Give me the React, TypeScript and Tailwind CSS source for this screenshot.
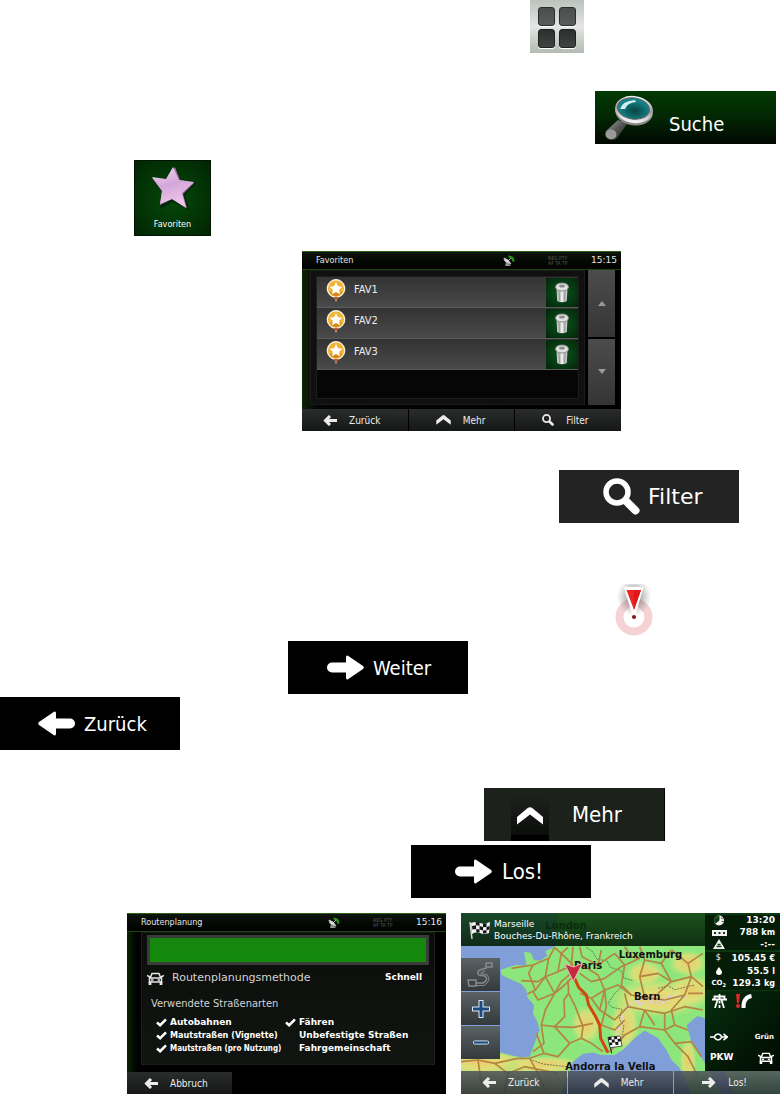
import type { ReactNode } from "react";

type IconProps = { className?: string };

const verdana = "font-['DejaVu_Sans',sans-serif]";
const tahoma = "font-['DejaVu_Sans_Condensed','DejaVu_Sans',sans-serif]";

/* ---------- Icons ---------- */

function ArrowIcon({ className = "" }: IconProps) {
  return (
    <svg viewBox="0 0 37 25" className={className} fill="currentColor" aria-hidden="true">
      <path d="M5 7.500h14V2.200Q19 0 21 .8L36 11q1.600 1.500 0 3L21 24.300Q19 25 19 22.800V17.500H5a5 5 0 0 1 0-10z" />
    </svg>
  );
}

function SmallArrowIcon({ className = "" }: IconProps) {
  return (
    <svg viewBox="0 0 14 11" className={className} fill="none" stroke="currentColor" strokeWidth="3" aria-hidden="true">
      <path d="M14 5.500H3M7 1L2.500 5.500 7 10" />
    </svg>
  );
}

function ChevronIcon({ className = "" }: IconProps) {
  return (
    <svg viewBox="0 0 26 18" className={className} fill="currentColor" aria-hidden="true">
      <path d="M0 10L11 .8Q13-.4 15 .8L26 10V17.500L13 7.500 0 17.500z" />
    </svg>
  );
}

function LensIcon({ className = "" }: IconProps) {
  return (
    <svg viewBox="0 0 37 37" className={className} fill="none" stroke="currentColor" aria-hidden="true">
      <circle cx="14" cy="14" r="11" strokeWidth="5.500" />
      <path d="M20.500 20.500l4 4" strokeWidth="5" />
      <path d="M24 24l8.500 8.500" strokeWidth="8" strokeLinecap="round" />
    </svg>
  );
}

function MagnifierPicture({ className = "" }: IconProps) {
  return (
    <svg viewBox="0 0 50 46" className={className} aria-hidden="true">
      <defs>
        <radialGradient id="glass" cx="55%" cy="60%">
          <stop offset="0" stopColor="#06453f" />
          <stop offset="1" stopColor="#16838c" />
        </radialGradient>
        <linearGradient id="rim" x1="0" y1="0" x2="0" y2="1">
          <stop offset="0" stopColor="#f5f5f5" />
          <stop offset="0.5" stopColor="#9b9b9b" />
          <stop offset="1" stopColor="#ffffff" />
        </linearGradient>
        <linearGradient id="grip" x1="0" y1="0" x2="1" y2="1">
          <stop offset="0" stopColor="#a5a5a5" />
          <stop offset="0.5" stopColor="#555555" />
          <stop offset="1" stopColor="#161616" />
        </linearGradient>
      </defs>
      <path d="M13 25L1 36q-2 6 4 8 6 2 7-1L22 29z" fill="url(#grip)" />
      <ellipse cx="6" cy="39.500" rx="5.500" ry="5" fill="#9a9a9a" />
      <ellipse cx="29" cy="16.500" rx="19" ry="14" fill="#8a8a8a" transform="rotate(8 29 16.500)" />
      <ellipse cx="29" cy="14.500" rx="19" ry="13.500" fill="url(#rim)" transform="rotate(8 29 14.500)" />
      <ellipse cx="28.500" cy="13.500" rx="16" ry="10.500" fill="url(#glass)" stroke="#5a6262" transform="rotate(8 28.500 13.500)" />
      <path d="M15 14q2-8 15-9l1 2q-9 1-11 7z" fill="#cfeeee" />
    </svg>
  );
}

function StarPicture({ className = "" }: IconProps) {
  return (
    <svg viewBox="0 0 44 44" className={className} aria-hidden="true">
      <defs>
        <linearGradient id="star" x1="0" y1="0" x2="0.3" y2="1">
          <stop offset="0" stopColor="#f2dcf0" />
          <stop offset="0.5" stopColor="#d3a6da" />
          <stop offset="1" stopColor="#f0c6e8" />
        </linearGradient>
      </defs>
      <path d="M25 4l6 13 14 0-11 12 4 15-16-8-13 7 3-15L3 15l14 2z" fill="#02100280" />
      <path d="M24 1l5 13 14 3-11 11 4 14-15-9-12 6 2-14L1 12l15 2z" fill="#a06aa6" />
      <path d="M22 1l6 13 15 2-12 11 4 15-14-9-12 5 2-13L1 11l14 2z" fill="url(#star)" />
    </svg>
  );
}

function PinIcon({ className = "" }: IconProps) {
  return (
    <svg viewBox="0 0 20 23" className={className} aria-hidden="true">
      <path d="M10 0a9.500 9.500 0 0 1 4 18l-2.500.8L10 23l-1.500-4.200L6 18A9.500 9.500 0 0 1 10 0z" fill="#fbf3e2" />
      <circle cx="10" cy="9.500" r="8" fill="#f2b233" />
      <path d="M4 13q6-3 12 0-2 4-6 4.500Q6 17 4 13z" fill="#d98a1c" />
      <path d="M8 18h4L10 22z" fill="#c4511b" />
      <path d="M10 3l2 4.200 4.500.5-3.400 3 1 4.600L10 13l-4.100 2.300 1-4.600-3.400-3L8 7.200z" fill="#fff" />
    </svg>
  );
}

function BinIcon({ className = "" }: IconProps) {
  return (
    <svg viewBox="0 0 14 21" className={className} aria-hidden="true">
      <path d="M1.500 6h11l-.7 13q-4.800 2.500-9.600 0z" fill="#c9c9c9" />
      <path d="M4 9l.4 10M10 9l-.4 10" stroke="#909090" />
      <path d="M7 9v11" stroke="#ececec" strokeWidth="2" />
      <ellipse cx="7" cy="5" rx="6.500" ry="4" fill="#e3e3e3" stroke="#8b8b8b" />
      <ellipse cx="7" cy="4" rx="3" ry="1.500" fill="#8d8d8d" />
    </svg>
  );
}

function SatelliteIcon({ className = "" }: IconProps) {
  return (
    <svg viewBox="0 0 12 12" className={className} aria-hidden="true">
      <path d="M1 3q0 5 7 6L5 5z" fill="#e4e0e4" stroke="#bbb" />
      <path d="M3 7l-1 4h6L5 8z" fill="#8f8f8f" />
      <path d="M5 6l3-3" stroke="#ccc" />
      <path d="M5.500 0.500q6 0 6 6L9.500 7Q9 3 5.500 2.500z" fill="#2f8f1c" />
    </svg>
  );
}

function CarIcon({ className = "" }: IconProps) {
  return (
    <svg viewBox="0 0 17 13" className={className} fill="none" stroke="currentColor" strokeWidth="1.500" aria-hidden="true">
      <path d="M3.500 5.500l1.500-4h7l1.500 4M2.500 6h12v4h-12zM0 3.500l3 1.500M17 3.500l-3 1.500" />
      <path d="M3 9.500V13M14 9.500V13" strokeWidth="2.800" />
      <path d="M4 8h2.500M10.500 8H13" />
    </svg>
  );
}

function CheckIcon({ className = "" }: IconProps) {
  return (
    <svg viewBox="0 0 12 10" className={className} fill="none" stroke="currentColor" strokeWidth="2.800" aria-hidden="true">
      <path d="M1 5l3.500 3L11 1.500" />
    </svg>
  );
}

function CheckeredFlag({ className = "" }: IconProps) {
  return (
    <svg viewBox="0 0 22 18" className={className} aria-hidden="true">
      <path d="M1 1l2 17" stroke="#d5d5d5" strokeWidth="1.500" />
      <path d="M2 2q5-2 9 0t10-1l-1 11q-5 2-9 0t-8 1z" fill="#f4f4f4" />
      <path
        d="M6.500 1l4 .3v3.500l-3.500-.6zM14 2.500l3.500-.2V6L14 6.200zM3 5l4-.8.2 3.700-3.800.6zM10.500 5l3.500 1v3.500L10.500 8.500zM17.500 6l3-1-.2 3.400-2.800.9zM7 8l3.500.5v3L7.500 11zM14 9.500l3.500-.3v3L14 12.600z"
        fill="#151515"
      />
    </svg>
  );
}

/* ---------- Stand-alone controls ---------- */

interface TileButtonProps {
  className: string;
  children: ReactNode;
}

function TileButton({ className, children }: TileButtonProps) {
  return (
    <button type="button" className={`flex h-[53px] items-center whitespace-nowrap text-white ${className}`}>
      {children}
    </button>
  );
}

function MenuButton() {
  return (
    <button
      type="button"
      aria-label="Menü"
      className="grid h-[53px] w-[54px] grid-cols-2 content-start gap-x-1 gap-y-[3px] bg-linear-to-b from-[#bcc2bd] via-[#e3e6e2] to-[#b4bab4] px-2 pt-[7px]"
    >
      <span className="h-[19px] rounded-[3px] border border-[#2b2d2d] bg-linear-to-b from-[#4b4e4e] to-[#5a5c5c] shadow-[0_1px_0_#fff]" />
      <span className="h-[19px] rounded-[3px] border border-[#2b2d2d] bg-linear-to-b from-[#4b4e4e] to-[#5a5c5c] shadow-[0_1px_0_#fff]" />
      <span className="h-[19px] rounded-[3px] border border-[#1f2020] bg-linear-to-b from-[#2d2f2f] to-[#424444] shadow-[0_1px_0_#fff]" />
      <span className="h-[19px] rounded-[3px] border border-[#1f2020] bg-linear-to-b from-[#2d2f2f] to-[#424444] shadow-[0_1px_0_#fff]" />
    </button>
  );
}

function PositionMarker() {
  return (
    <svg viewBox="0 0 40 52" className="h-[52px] w-10" role="img" aria-label="Position">
      <defs>
        <radialGradient id="halo" cx="50%" cy="50%">
          <stop offset="0" stopColor="#555" stopOpacity="0.8" />
          <stop offset="1" stopColor="#777" stopOpacity="0" />
        </radialGradient>
      </defs>
      <circle cx="20" cy="33" r="14.500" fill="#fff" stroke="#f5d3d4" strokeWidth="8" />
      <ellipse cx="20" cy="13" rx="17" ry="19" fill="url(#halo)" />
      <path d="M9.500 3h20L21.500 31h-3z" fill="#fff" />
      <path d="M12.500 6h14.500L20 26z" fill="#ee2326" />
      <path d="M20 6h7L20 26z" fill="#de191e" />
      <circle cx="20" cy="33" r="2" fill="#8b0f14" />
    </svg>
  );
}

/* ---------- Device screens ---------- */

function ScreenHeader({ title, time }: { title: string; time: string }) {
  return (
    <header className="flex h-[19px] items-center border-t border-b border-t-[#2c6313] border-b-[#1d450c] bg-linear-to-b from-[#0e150c] to-[#010201] pr-1 pl-[14px] text-[9px] text-[#e4e4e4]">
      <h2 className="flex-1">{title}</h2>
      <SatelliteIcon className="mr-[33px] size-3" />
      <p className="mr-[19px] w-6 text-[5px] leading-[5px] whitespace-nowrap text-[#5a5a5a]">
        REG PTY
        <br />
        AF TA TP
      </p>
      <time className={verdana}>{time}</time>
    </header>
  );
}

const barButton = "flex items-center gap-3 bg-linear-to-b from-[#2a2d2b] to-[#151816] text-[10px] text-[#ececec]";

const favourites = ["FAV1", "FAV2", "FAV3"];

function FavouritesScreen() {
  return (
    <section className={`flex h-[180px] w-[319px] flex-col bg-black ${tahoma}`}>
      <ScreenHeader title="Favoriten" time="15:15" />
      <div className="flex flex-1 gap-[3px] bg-linear-to-r from-[#0d2405] via-[#050505] via-5% to-black pr-[6px] pb-1 pl-2">
        <div className="flex-1 border border-[#1c1c1c] bg-[#101010] p-[5px]">
          <ul className="h-full border border-[#1d1d1d] bg-[#060606]">
            {favourites.map((name) => (
              <li key={name} className="flex h-[31px] items-center border-b border-[#5a5a5a] bg-linear-to-b from-[#333] to-[#4a4a4a] pl-[9px] text-[11px] text-[#ececec]">
                <PinIcon className="mr-2 mb-1 h-[23px] w-5" />
                <span className="flex-1 pb-1">{name}</span>
                <button type="button" aria-label={`${name} löschen`} className="flex h-[29px] w-8 items-center justify-center bg-radial from-[#0b5a1d] to-[#03240a]">
                  <BinIcon className="h-[21px] w-[14px]" />
                </button>
              </li>
            ))}
          </ul>
        </div>
        <div className="flex w-[27px] flex-col gap-[2px]">
          <button type="button" aria-label="Nach oben" className="flex flex-1 items-center justify-center bg-linear-to-b from-[#4c4c4c] to-[#353535] text-[#999]">
            <svg viewBox="0 0 8 5" className="h-[5px] w-2" fill="currentColor">
              <path d="M4 0l4 5H0z" />
            </svg>
          </button>
          <button type="button" aria-label="Nach unten" className="flex flex-1 items-center justify-center bg-linear-to-b from-[#4c4c4c] to-[#353535] text-[#999]">
            <svg viewBox="0 0 8 5" className="h-[5px] w-2" fill="currentColor">
              <path d="M4 5l4-5H0z" />
            </svg>
          </button>
        </div>
      </div>
      <nav className="grid h-[22px] grid-cols-3 gap-px">
        <button type="button" className={`${barButton} pl-[21px]`}>
          <SmallArrowIcon className="h-[11px] w-[14px]" />
          Zurück
        </button>
        <button type="button" className={`${barButton} pl-[27px]`}>
          <ChevronIcon className="h-[10px] w-[15px]" />
          Mehr
        </button>
        <button type="button" className={`${barButton} pl-[27px]`}>
          <LensIcon className="size-3" />
          Filter
        </button>
      </nav>
    </section>
  );
}

const roadTypes = [
  { label: "Autobahnen", used: true, font: "font-['DejaVu_Sans',sans-serif] text-[9px]" },
  { label: "Fähren", used: true, font: "font-['DejaVu_Sans',sans-serif] text-[9px]" },
  { label: "Mautstraßen (Vignette)", used: true, font: "text-[9px]" },
  { label: "Unbefestigte Straßen", used: false, font: "font-['DejaVu_Sans',sans-serif] text-[9px]" },
  { label: "Mautstraßen (pro Nutzung)", used: true, font: "text-[8px]" },
  { label: "Fahrgemeinschaft", used: false, font: "font-['DejaVu_Sans',sans-serif] text-[9px]" },
];

function RouteScreen() {
  return (
    <section className={`flex h-[181px] min-w-0 flex-1 flex-col bg-black text-[#e6e6e6] ${tahoma}`}>
      <ScreenHeader title="Routenplanung" time="15:16" />
      <div className="flex-1 bg-linear-to-r from-[#0d2405] via-black via-5% to-black pr-[11px] pb-[7px] pl-[14px]">
        <div className="h-full border border-[#1b1f1b] bg-linear-to-b from-[#0b0d0b] to-[#111511] px-[5px] pt-[2px]">
          <div role="progressbar" aria-label="Routenplanung" className="h-[30px] border-[3px] border-[#3a3c3a] bg-[#333]">
            <div className="h-full w-full bg-linear-to-b from-[#16870f] to-[#148a0c]" />
          </div>
          <p className={`mt-[5px] flex h-4 items-center ${verdana}`}>
            <CarIcon className="h-[13px] w-[17px]" />
            <span className="ml-2 flex-1 text-[11px] text-[#d4d4d4]">Routenplanungsmethode</span>
            <b className="mr-[7px] text-[9px] text-white">Schnell</b>
          </p>
          <p className="mt-[10px] pl-1 text-[11px] leading-4 text-[#d4d4d4]">Verwendete Straßenarten</p>
          <div className="mt-1 grid grid-cols-[129px_1fr] pl-[9px] font-bold whitespace-nowrap text-white">
            {roadTypes.map((road) => (
              <label key={road.label} className={`relative flex h-[13px] items-center gap-[3px] ${road.font}`}>
                <input type="checkbox" defaultChecked={road.used} className="peer sr-only" />
                <CheckIcon className="invisible h-[9px] w-[11px] shrink-0 peer-checked:visible" />
                {road.label}
              </label>
            ))}
          </div>
        </div>
      </div>
      <nav className="flex h-[22px]">
        <button type="button" className={`${barButton} w-[105px] pl-[17px]`}>
          <SmallArrowIcon className="h-[11px] w-[14px]" />
          Abbruch
        </button>
      </nav>
    </section>
  );
}

/* ---------- Map ---------- */

const mainRoads = [
  "M290 112L272 145 225 165 160 175M225 165L212 190 232 240 208 252M290 112L320 140 345 165M272 145L262 200 232 240",
  "M345 165L300 185 262 200 240 215 190 212M345 185L310 215 290 250 240 270 225 245M290 250L262 300 250 345 258 400 225 425",
  "M262 200L290 250 320 225 345 200M330 210L332 250 352 290 375 350 370 385 335 400 290 350 250 345",
  "M290 350L320 320 318 270 332 250M335 400L300 440 258 430 235 370M370 385L400 400 435 425M290 350L345 352 405 340",
  "M340 165L345 110M300 185L310 130 330 112M365 110L372 140 420 165 470 130M372 165L420 195 440 240 425 300 470 330",
  "M365 190L400 215 440 205 490 170 545 145M440 240L480 225 520 255 560 262M440 240L445 290 430 345 470 360 500 330",
  "M420 165L430 120M470 130L500 165 490 225 520 255M545 110L560 150 545 200 560 262 620 270M560 150L610 160 640 120",
  "M610 160L640 215 600 250M640 215L700 200 735 230M640 120L690 160 700 200 680 255 620 270M690 160L735 130M545 200L600 190 640 215",
  "M470 330L510 290 560 300 620 310 680 290 735 300M510 290L500 250M560 300L545 350 500 375 455 425M545 350L620 360 650 345 690 360",
  "M620 310L620 360 650 400 690 440 720 500M650 400L700 395 730 440M650 345L640 300 680 255M560 300L590 345",
  "M9 455L60 450 110 460 180 445 215 445 258 430M60 450L70 520M110 460L150 490 200 470 300 490M150 490L140 545M215 445L240 490 260 540",
  "M425 300L400 265 365 250M400 265L440 240M480 400L500 375M735 250L690 250M500 110L520 140 545 145",
];

const mountains = [
  { cx: 600, cy: 265, rx: 150, ry: 60 },
  { cx: 600, cy: 270, rx: 110, ry: 40 },
  { cx: 500, cy: 345, rx: 46, ry: 80 },
  { cx: 385, cy: 345, rx: 48, ry: 60 },
  { cx: 260, cy: 462, rx: 120, ry: 24 },
  { cx: 70, cy: 455, rx: 110, ry: 38 },
  { cx: 560, cy: 190, rx: 60, ry: 40 },
  { cx: 700, cy: 240, rx: 70, ry: 50 },
  { cx: 690, cy: 160, rx: 60, ry: 40 },
  { cx: 690, cy: 450, rx: 26, ry: 70 },
];

function MapPicture() {
  return (
    <svg viewBox="9 9 957 543" preserveAspectRatio="xMidYMid slice" className="absolute inset-0 size-full" role="img" aria-label="Karte">
      <defs>
        <radialGradient id="relief">
          <stop offset="0" stopColor="#eccb6c" />
          <stop offset="0.6" stopColor="#e6df78" stopOpacity="0.8" />
          <stop offset="1" stopColor="#c8e67c" stopOpacity="0" />
        </radialGradient>
      </defs>
      <rect x="9" y="9" width="957" height="543" fill="#809fd8" />
      <path
        d="M300 9L290 110 262 124 268 138 245 152 228 150 218 128 198 126 206 168 175 165 150 172 128 180 132 195 150 205 190 222 205 240 208 262 228 285 225 310 238 335 245 360 228 405 215 440 190 442 140 432 100 420 9 415V552H310L330 500 345 455 375 432 405 428 430 436 470 436 495 420 530 385 560 362 600 385 625 420 640 450 665 475 700 552H966V9z"
        fill="#8ce67c"
      />
      <path d="M9 420L120 430 190 445 330 465 310 552H9z" fill="#c9dc78" />
      {mountains.map((m) => (
        <ellipse key={`${m.cx}-${m.cy}-${m.rx}`} {...m} fill="url(#relief)" />
      ))}
      <path d="M700 552L665 475 640 450 625 420 600 385 560 362 530 385 495 420 470 436 430 436 405 428 375 432 345 455 330 500 310 552z" fill="#809fd8" />
      <path d="M686 345L718 318 760 330 800 480 830 552H790L735 450 700 395z" fill="#809fd8" />
      <path
        d="M470 395l8-30 14-25 2-30 22-28 30-14 38-6 30 8 34-14 38 6M540 285l30-10 40 4 30-14"
        fill="none"
        stroke="#d9d2cf"
        strokeWidth="10"
        strokeDasharray="14 7 5 9"
      />
      <path
        d="M385 112l20 14 12 22 30 4 10 20 32 10 8 22 30 8M215 448l40 14 50 6 25 2M490 232l-20 18-20 30 12 12 30 6-8 30 14 20-10 50M600 235l30-8 20 12 60-14"
        fill="none"
        stroke="#57684f"
        strokeWidth="2.500"
        strokeDasharray="6 3"
      />
      {mainRoads.map((d) => (
        <path key={d} d={d} fill="none" stroke="#b58440" strokeWidth="5" strokeLinejoin="round" />
      ))}
      <path d="M350 205L362 232 385 255 392 285 412 318 425 345 428 385 450 428" fill="none" stroke="#d2470f" strokeWidth="9" strokeLinejoin="round" />
      <g fontFamily="'DejaVu Sans', sans-serif" fontWeight="700" fontSize="30" fill="#111">
        <text x="262" y="56">London</text>
        <text x="348" y="178">Paris</text>
        <text x="482" y="145">Luxemburg</text>
        <text x="528" y="269">Bern</text>
        <text x="322" y="481">Andorra la Vella</text>
        <text x="775" y="315">Ljubljana</text>
      </g>
      <path d="M320 162l27 9 26-11-27 54z" fill="#c32c3d" stroke="#efb2b6" strokeWidth="3" />
      <g transform="translate(448 378)">
        <path d="M3 4l10 48" stroke="#222" strokeWidth="3" />
        <path d="M2 4l36-4 6 30-36 5z" fill="#fff" stroke="#111" strokeWidth="2" />
        <path d="M3 4l9-1 1 8-9 1zM20 2l9-1 1 8-9 1zM13 11l8-1 2 9-9 1zM30 9l9-1 2 8-9 1zM6 20l8-1 1 8-8 1zM23 18l9-1 2 9-9 1z" fill="#111" />
      </g>
    </svg>
  );
}

const mapButton = "flex h-[33px] w-[39px] items-center justify-center bg-linear-to-b from-[#5a6265] to-[#343a3c]";

const tripRows = [
  {
    value: "13:20",
    unit: "",
    icon: (
      <svg viewBox="0 0 12 12" className="h-[11px] w-3">
        <circle cx="6" cy="6" r="5.500" fill="#f2f2f2" />
        <path d="M6 6V1a5 5 0 0 0-4 8zM8 3l2 1M9 7h2" fill="#123a15" stroke="#123a15" />
      </svg>
    ),
  },
  {
    value: "788",
    unit: "km",
    icon: (
      <svg viewBox="0 0 15 6" className="h-[6px] w-[15px]">
        <path d="M0 0h15v6H0z" fill="#f2f2f2" />
        <path d="M2 3h2M6.500 3h2M11 3h2" stroke="#123a15" strokeWidth="2" />
      </svg>
    ),
  },
  {
    value: "-:--",
    unit: "",
    icon: (
      <svg viewBox="0 0 12 10" className="h-[10px] w-3">
        <path d="M6 0l6 10H0z" fill="#f2f2f2" />
        <path d="M3.500 7.500h5M4.500 5.500h3" stroke="#123a15" strokeWidth="1.500" />
      </svg>
    ),
  },
];

const costRows = [
  { value: "105.45", unit: "€", icon: <span className="text-[8px]">$</span> },
  {
    value: "55.5",
    unit: "l",
    icon: (
      <svg viewBox="0 0 6 8" className="h-2 w-[6px]" fill="#fff">
        <path d="M3 0q3 4 3 5.300a3 2.700 0 0 1-6 0Q0 4 3 0z" />
      </svg>
    ),
  },
  {
    value: "129.3",
    unit: "kg",
    icon: (
      <span className="text-[7px] font-bold">
        CO<sub className="text-[5px]">2</sub>
      </span>
    ),
  },
];

interface InfoRow {
  value: string;
  unit: string;
  icon: ReactNode;
}

function InfoRows({ rows }: { rows: InfoRow[] }) {
  return (
    <>
      {rows.map((row) => (
        <div key={row.value} className="flex flex-1 items-center justify-between pr-[5px]">
          <dt className="flex w-7 items-center justify-center">{row.icon}</dt>
          <dd className="text-[9px] leading-[11px] font-bold whitespace-nowrap">
            {row.value} {row.unit && <small className="text-[8px]">{row.unit}</small>}
          </dd>
        </div>
      ))}
    </>
  );
}

function MapScreen() {
  const navButton = "flex items-center gap-3 bg-linear-to-b from-[#4d545cdd] to-[#262c33dd] text-[10px] text-[#ececec]";
  return (
    <section className={`relative flex h-[181px] min-w-0 flex-1 flex-col overflow-hidden text-white ${verdana}`}>
      <MapPicture />
      <div className="relative flex flex-1">
        <div className="flex-1">
          <header className="flex h-[33px] items-center gap-[3px] bg-linear-to-b from-[#083a0cd9] to-[#06220aec] pl-2">
            <CheckeredFlag className="h-[18px] w-[22px]" />
            <h2 className="text-[9px] leading-3 whitespace-nowrap">
              Marseille
              <br />
              Bouches-Du-Rhône, Frankreich
            </h2>
          </header>
          <div className="mt-3 flex flex-col gap-px">
            <button type="button" aria-label="Route" className={mapButton}>
              <svg viewBox="0 0 28 28" className="size-7" fill="none" stroke="#858b8d" strokeWidth="1.500">
                <path d="M19 2v6M19 2h6v4h-6M1 19h8v6H2zM9 22h7q6-3 2-7l-6-1q-3-3 1-5l6-2" />
                <path d="M9 24.500h8q8-5 3-11l-6-1q-1-1 4-2.500" strokeWidth="1" />
              </svg>
            </button>
            <button type="button" aria-label="Vergrößern" className={mapButton}>
              <svg viewBox="0 0 18 18" className="size-[18px]">
                <path d="M9 1v16M1 9h16" stroke="#dcebf8" strokeWidth="5" strokeLinecap="round" />
                <path d="M9 1v16M1 9h16" stroke="#1c4a7c" strokeWidth="3" />
              </svg>
            </button>
            <button type="button" aria-label="Verkleinern" className={mapButton}>
              <svg viewBox="0 0 16 5" className="h-[5px] w-4">
                <path d="M2 2.500h12" stroke="#dcebf8" strokeWidth="4" strokeLinecap="round" />
                <path d="M1 2.500h14" stroke="#1c4a7c" strokeWidth="2.200" />
              </svg>
            </button>
          </div>
        </div>
        <aside className="flex w-[75px] flex-col bg-[#0b3810] pt-[2px]">
          <dl className="flex h-[35px] flex-col bg-[#051c07f5]">
            <InfoRows rows={tripRows} />
          </dl>
          <dl className="mt-[2px] flex h-[38px] flex-col bg-[#051c07f5]">
            <InfoRows rows={costRows} />
          </dl>
          <div className="mt-px flex flex-1 flex-col bg-linear-to-br from-[#083010] to-[#010a02]">
            <div className="flex h-5 items-center gap-[9px] pl-[7px]">
              <svg viewBox="0 0 15 14" className="h-[14px] w-[15px]" fill="none" stroke="#fff" strokeWidth="1.800">
                <path d="M0 5.500h15M2.500 5V2.500h10V5M5.500 6L3 14M9.500 6L12 14M7.500 0v5M7.500 7v2.500M7.500 11v3" />
              </svg>
              <svg viewBox="0 0 17 16" className="h-4 w-[17px]">
                <path d="M0 1h4L3 10H1z" fill="#e3262b" />
                <circle cx="2" cy="13" r="2" fill="#e3262b" />
                <path d="M7.500 15Q7 4.500 15.500 3" fill="none" stroke="#fff" strokeWidth="4" />
              </svg>
            </div>
            <p className="mt-4 flex h-5 items-center justify-between pr-[6px] pl-[5px] text-[7px] font-bold">
              <svg viewBox="0 0 18 8" className="h-2 w-[18px]" fill="none" stroke="#fff" strokeWidth="1.600">
                <path d="M0 4h4q4-6 8 0h5M4 4q4 6 8 0M13.500 1l4 3-4 3" />
              </svg>
              Grün
            </p>
            <p className="flex h-[22px] items-center justify-between pr-[6px] pl-[5px] text-[9px] font-bold">
              PKW
              <CarIcon className="h-3 w-4" />
            </p>
          </div>
        </aside>
      </div>
      <nav className={`relative grid h-[23px] grid-cols-3 gap-px ${tahoma}`}>
        <button type="button" className={`${navButton} pl-[21px]`}>
          <SmallArrowIcon className="h-[11px] w-[14px]" />
          Zurück
        </button>
        <button type="button" className={`${navButton} pl-[26px]`}>
          <ChevronIcon className="h-[10px] w-[15px]" />
          Mehr
        </button>
        <button type="button" className={`${navButton} pl-[28px]`}>
          <SmallArrowIcon className="h-[11px] w-[14px] rotate-180" />
          Los!
        </button>
      </nav>
    </section>
  );
}

export default function App() {
  return (
    <main className={`flex flex-col bg-white ${tahoma}`}>
      <div className="flex justify-end pr-[196px]">
        <MenuButton />
      </div>

      <div className="mt-[38px] flex justify-end pr-1">
        <TileButton className="w-[181px] gap-[14px] bg-linear-to-b from-[#013a03] via-[#022703] to-[#010801] pl-[10px] text-[20px]">
          <MagnifierPicture className="h-[46px] w-[50px]" />
          <span className="pt-3">Suche</span>
        </TileButton>
      </div>

      <div className="mt-4 pl-[134px]">
        <button
          type="button"
          className="flex h-[76px] w-[77px] flex-col items-center gap-2 border border-[#021502] bg-radial from-[#064a0a] to-[#012503] pt-[5px] text-[9px] text-white"
        >
          <StarPicture className="size-11" />
          Favoriten
        </button>
      </div>

      <div className="mt-[15px] pl-[302px]">
        <FavouritesScreen />
      </div>

      <div className="mt-[39px] flex justify-end pr-[41px]">
        <TileButton className={`w-[180px] gap-2 bg-[#232323] pl-11 text-[22px] ${verdana}`}>
          <LensIcon className="size-[37px]" />
          Filter
        </TileButton>
      </div>

      <div className="mt-[61px] flex justify-end pr-[126px]">
        <PositionMarker />
      </div>

      <div className="mt-[5px] pl-[288px]">
        <TileButton className="w-[180px] gap-[9px] bg-black pl-[39px] text-[20px]">
          <ArrowIcon className="h-[25px] w-[37px]" />
          Weiter
        </TileButton>
      </div>

      <div className="mt-[3px]">
        <TileButton className="w-[180px] gap-[9px] bg-black pl-[38px] text-[20px]">
          <ArrowIcon className="h-[25px] w-[37px] rotate-180" />
          Zurück
        </TileButton>
      </div>

      <div className="mt-[38px] flex justify-end pr-[115px]">
        <TileButton className="w-[181px] gap-[23px] border-r border-black bg-[#1c211b] pl-[27px] text-[22px]">
          <span className="mt-2 flex h-[45px] w-[38px] justify-center border-b-[6px] border-black bg-linear-to-b from-[#1d211d] to-[#0b0d0b] pt-[11px]">
            <ChevronIcon className="h-[18px] w-[26px]" />
          </span>
          Mehr
        </TileButton>
      </div>

      <div className="mt-1 flex justify-end pr-[189px]">
        <TileButton className="w-[180px] gap-[10px] bg-black pl-11 text-[22px]">
          <ArrowIcon className="h-[25px] w-[37px]" />
          Los!
        </TileButton>
      </div>

      <div className="mt-[15px] flex gap-[15px] pl-[127px]">
        <RouteScreen />
        <MapScreen />
      </div>
    </main>
  );
}
